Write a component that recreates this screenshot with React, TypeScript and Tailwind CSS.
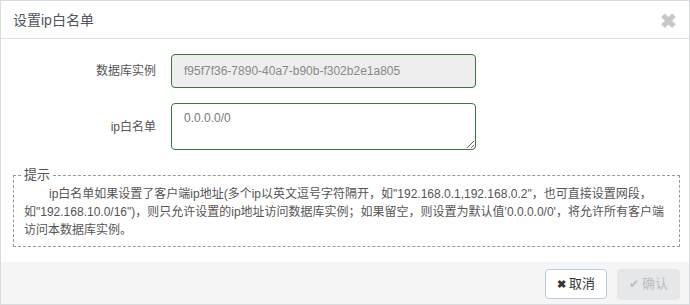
import React from "react";

export default function App() {
  const font = { fontFamily: '"Liberation Sans", "Noto Sans CJK SC", sans-serif' };
  return (
    <div
      className="w-[690px] h-[305px] bg-white border border-[#d9dcdf] flex flex-col text-[#555] box-border"
      style={font}
    >
      <div className="h-[38px] shrink-0 border-b border-[#dde1e4] flex items-center justify-between pl-[12px] pr-[12px]">
        <span className="text-[14px] text-[#505561] leading-none">设置ip白名单</span>
        <span className="text-[#c8c8c8] text-[20px] font-bold leading-none mt-[2px]">✖</span>
      </div>
      <div className="flex-1 flex flex-col pt-[15px] px-[11px]">
        <div className="flex items-center h-[34px]">
          <label className="w-[145px] text-right pr-[1px] text-[12px] text-[#555]">数据库实例</label>
          <div className="ml-[14px] w-[305px] h-[34px] rounded-[4px] border border-[#3c763d] bg-[#eeeeee] flex items-center px-[12px] text-[12px] text-[#888]">
            f95f7f36-7890-40a7-b90b-f302b2e1a805
          </div>
        </div>
        <div className="flex items-center h-[47px] mt-[15px]">
          <label className="w-[145px] text-right pr-[1px] text-[12px] text-[#555]">ip白名单</label>
          <textarea
            className="ml-[14px] w-[305px] h-[47px] rounded-[4px] border border-[#3c763d] bg-white px-[12px] pt-[5px] text-[12px] text-[#777] outline-none"
            style={font}
            defaultValue="0.0.0.0/0"
          />
        </div>
        <fieldset className="mt-[17px] border border-dashed border-[#999] px-[10px] pb-[7px] pt-0 min-w-0 w-[667px] ml-[1px]">
          <legend className="px-[1px] text-[13px] text-[#555] ml-[-1px] leading-[16px]">提示</legend>
          <p className="text-[12px] leading-[18px] text-[#555] indent-[25px] mt-[2px]">
            ip白名单如果设置了客户端ip地址(多个ip以英文逗号字符隔开，如"192.168.0.1,192.168.0.2"，也可直接设置网段，如"192.168.10.0/16")，则只允许设置的ip地址访问数据库实例；如果留空，则设置为默认值'0.0.0.0/0'，将允许所有客户端访问本数据库实例。
          </p>
        </fieldset>
      </div>
      <div className="h-[42px] shrink-0 bg-[#f5f5f5] flex items-center justify-end gap-[10px] pr-[9px] pt-[2px]">
        <button className="h-[30px] w-[62px] rounded-[4px] border border-[#b9cce0] bg-white text-[13px] text-[#333] flex items-center justify-center gap-[3px]">
          <span className="text-[11px] font-bold">✖</span>
          <span>取消</span>
        </button>
        <button className="h-[31px] w-[63px] rounded-[4px] bg-[#e6e7e9] text-[13px] text-[#bbbdc0] flex items-center justify-center gap-[3px]">
          <span className="text-[12px]">✔</span>
          <span>确认</span>
        </button>
      </div>
    </div>
  );
}
